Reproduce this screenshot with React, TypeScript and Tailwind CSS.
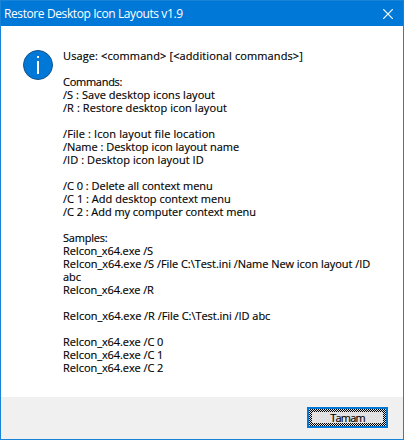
import React from "react";

type Line = { text: string; cls?: string };

const lines: Line[] = [
  { text: "Usage: <command> [<additional commands>]", cls: "tracking-[0.11px]" },
  { text: "" },
  { text: "Commands:", cls: "tracking-[-0.27px]" },
  { text: "/S : Save desktop icons layout", cls: "tracking-[0.05px]" },
  { text: "/R : Restore desktop icon layout", cls: "tracking-[0.07px]" },
  { text: "" },
  { text: "/File : Icon layout file location", cls: "tracking-[0.12px]" },
  { text: "/Name : Desktop icon layout name", cls: "tracking-[-0.02px]" },
  { text: "/ID : Desktop icon layout ID", cls: "tracking-[0.07px]" },
  { text: "" },
  { text: "/C 0 : Delete all context menu", cls: "tracking-[-0.02px]" },
  { text: "/C 1 : Add desktop context menu", cls: "tracking-[0.02px]" },
  { text: "/C 2 : Add my computer context menu", cls: "tracking-[-0.05px]" },
  { text: "" },
  { text: "Samples:", cls: "tracking-[-0.22px]" },
  { text: "ReIcon_x64.exe /S", cls: "tracking-[-0.1px]" },
  {
    text: "ReIcon_x64.exe /S /File C:\\Test.ini /Name New icon layout /ID",
    cls: "tracking-[-0.04px]",
  },
  { text: "abc" },
  { text: "ReIcon_x64.exe /R", cls: "tracking-[-0.1px]" },
  { text: "" },
  { text: "ReIcon_x64.exe /R /File C:\\Test.ini /ID abc", cls: "tracking-[-0.04px]" },
  { text: "" },
  { text: "ReIcon_x64.exe /C 0", cls: "tracking-[-0.08px]" },
  { text: "ReIcon_x64.exe /C 1", cls: "tracking-[-0.08px]" },
  { text: "ReIcon_x64.exe /C 2", cls: "tracking-[-0.08px]" },
];

export default function App() {
  return (
    <div className="flex h-[440px] w-[404px] flex-col border border-[#1883d7] bg-white font-['Open_Sans','Noto_Sans',sans-serif] text-black">
      <header className="flex h-[25px] shrink-0 items-center justify-between bg-[#0078d7] pr-2.5 pl-[3px] text-white">
        <h1 className="text-[12px] leading-[15px] tracking-[-0.4px] whitespace-pre">
          Restore Desktop Icon Layouts v1.9
        </h1>
        <button aria-label="Close">
          <svg width="10" height="10" viewBox="0 0 10 10" stroke="white" strokeWidth="1.2" className="block">
            <path d="M.2.2 9.8 9.8M9.8.2.2 9.8" />
          </svg>
        </button>
      </header>
      <main className="flex h-[371px] shrink-0 pt-[23px] pl-[22px]">
        <svg width="30" height="30" viewBox="0 0 30 30" className="mt-px block shrink-0">
          <circle cx="15" cy="15" r="14.5" fill="#0078d7" stroke="#11548c" />
          <path d="M14 11h2V24h-2zM14 6h2v2h-2z" fill="white" />
        </svg>
        <div className="pl-[10px] text-[11px] [-webkit-text-stroke:0.15px_black]">
          {lines.map((l, i) => (
            <p key={i} className={"h-[13px] leading-[13px] whitespace-pre " + (l.cls ?? "")}>
              {l.text}
            </p>
          ))}
        </div>
      </main>
      <footer className="flex flex-1 items-start justify-end bg-[#f0f0f0] pt-[10px] pr-[15px]">
        <button className="flex h-[21px] w-[81px] border-2 border-[#0078d7] bg-[repeating-conic-gradient(#000_0_25%,#e1e1e1_0_50%)] bg-size-[2px_2px] p-[3px] text-[11px]">
          <span className="flex h-full w-full items-center justify-center bg-[#e1e1e1] leading-[11px] tracking-[-0.8px] [-webkit-text-stroke:0.15px_black]">
            Tamam
          </span>
        </button>
      </footer>
    </div>
  );
}
